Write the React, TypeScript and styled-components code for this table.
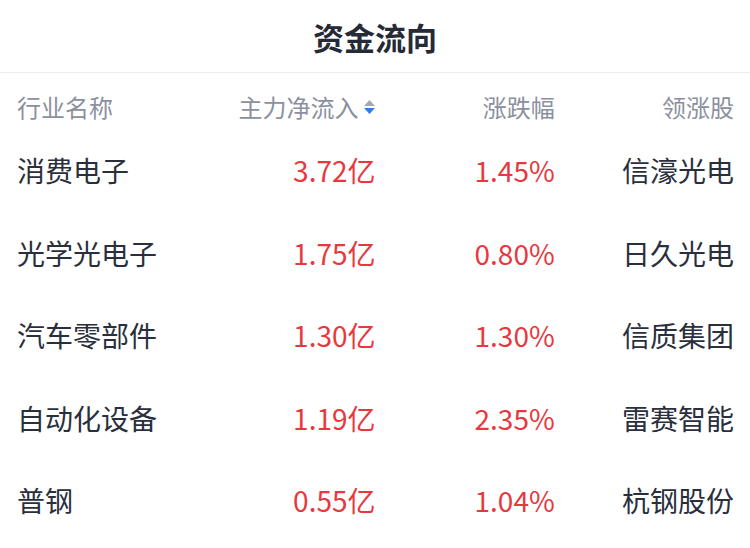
import React from "react";
import styled, { createGlobalStyle } from "styled-components";

const GlobalStyle = createGlobalStyle`
  html, body { margin: 0; padding: 0; background: #ffffff; }
  body { font-family: "Noto Sans CJK SC", "Noto Sans", sans-serif; }
`;

const Page = styled.div`
  width: 750px;
  height: 548px;
  background: #fff;
  overflow: hidden;
`;

const TitleBar = styled.div`
  height: 73px;
  display: flex;
  align-items: center;
  justify-content: center;
  border-bottom: 1px solid #ececef;
  box-sizing: border-box;
  padding-top: 1px;
`;

const Title = styled.h1`
  margin: 0;
  font-size: 31px;
  font-weight: 700;
  color: #262a37;
  letter-spacing: 0px;
`;

const Grid = styled.div<{ $header?: boolean }>`
  display: grid;
  grid-template-columns: repeat(4, 1fr);
  align-items: center;
  padding: ${(p) => (p.$header ? "12px 16px 0 17px" : "0 16px 0 17px")};
  height: ${(p) => (p.$header ? "57px" : "82.4px")};
  box-sizing: border-box;
`;

const Cell = styled.div<{ $align?: "left" | "right"; $tone: "head" | "name" | "up" }>`
  text-align: ${(p) => p.$align ?? "right"};
  font-size: ${(p) => (p.$tone === "head" ? "24px" : "28px")};
  line-height: 1.2;
  white-space: nowrap;
  color: ${(p) =>
    p.$tone === "head" ? "#8b90a0" : p.$tone === "up" ? "#e8383d" : "#2a2f3d"};
  display: flex;
  align-items: center;
  justify-content: ${(p) => (p.$align === "left" ? "flex-start" : "flex-end")};
`;

const SortIcon = styled.svg`
  width: 13px;
  height: 16px;
  margin-left: 4px;
  margin-right: 0px;
`;

const rows = [
  { name: "消费电子", flow: "3.72亿", pct: "1.45%", lead: "信濠光电" },
  { name: "光学光电子", flow: "1.75亿", pct: "0.80%", lead: "日久光电" },
  { name: "汽车零部件", flow: "1.30亿", pct: "1.30%", lead: "信质集团" },
  { name: "自动化设备", flow: "1.19亿", pct: "2.35%", lead: "雷赛智能" },
  { name: "普钢", flow: "0.55亿", pct: "1.04%", lead: "杭钢股份" },
];

export default function App() {
  return (
    <Page>
      <GlobalStyle />
      <TitleBar>
        <Title>资金流向</Title>
      </TitleBar>
      <Grid $header>
        <Cell $align="left" $tone="head">行业名称</Cell>
        <Cell $tone="head">
          主力净流入
          <SortIcon viewBox="0 0 13 16">
            <path d="M6.5 1 L12 7 L1 7 Z" fill="#a3a8b6" />
            <path d="M1 9 L12 9 L6.5 15 Z" fill="#2f7cf6" />
          </SortIcon>
        </Cell>
        <Cell $tone="head">涨跌幅</Cell>
        <Cell $tone="head">领涨股</Cell>
      </Grid>
      {rows.map((r) => (
        <Grid key={r.name}>
          <Cell $align="left" $tone="name">{r.name}</Cell>
          <Cell $tone="up">{r.flow}</Cell>
          <Cell $tone="up">{r.pct}</Cell>
          <Cell $tone="name">{r.lead}</Cell>
        </Grid>
      ))}
    </Page>
  );
}
